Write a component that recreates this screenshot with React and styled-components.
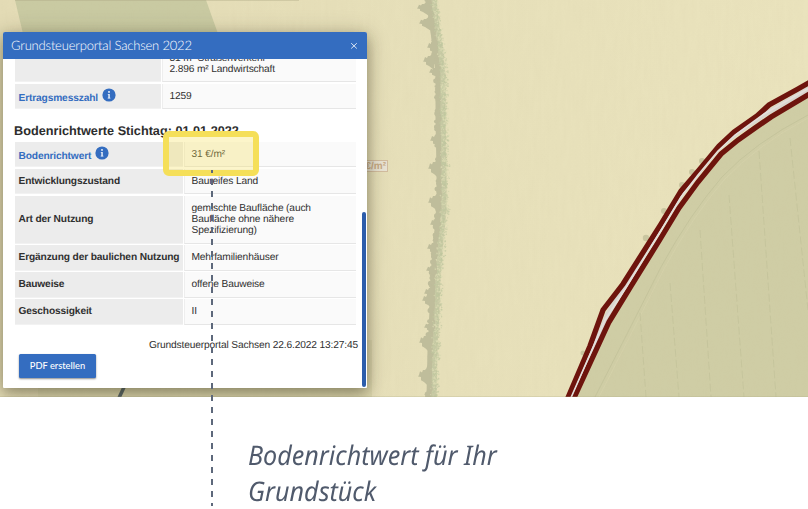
import React from "react";
import styled, { createGlobalStyle } from "styled-components";

const GlobalStyle = createGlobalStyle`
  * { box-sizing: border-box; }
  html, body { margin: 0; background: #fff; overflow: hidden; }
`;

const Page = styled.main`
  position: relative;
  width: 808px;
  height: 509px;
  overflow: hidden;
  background: #fff;
  font-family: "Liberation Sans", Arial, sans-serif;
  text-rendering: geometricPrecision;
`;

const MapArea = styled.section`
  position: relative;
  height: 397px;
  overflow: hidden;
  background: #e5deb7;
`;

const MapDrawing = styled.svg`
  display: block;
`;

const PriceTag = styled.span`
  position: absolute;
  left: 358px;
  top: 160px;
  width: 30px;
  height: 12px;
  padding-right: 1px;
  border: 1px solid #d3bd9f;
  background: #e9e3d3;
  color: #c7aa85;
  font-size: 10px;
  font-weight: 700;
  line-height: 11px;
  text-align: right;
`;

const Popup = styled.article`
  position: absolute;
  left: 3px;
  top: 32px;
  width: 364px;
  height: 355.5px;
  display: flex;
  flex-direction: column;
  border-radius: 3px 3px 1px 1px;
  background: #fff;
  box-shadow: 0 5px 14px rgba(50, 45, 20, 0.4), 0 2px 24px rgba(50, 45, 20, 0.2);
`;

const TitleBar = styled.header`
  flex: 0 0 27px;
  display: flex;
  align-items: center;
  justify-content: space-between;
  padding: 0 9px 0 8px;
  border-radius: 2px 2px 0 0;
  background: #346dc0;
  color: #fff;
`;

const Title = styled.h1`
  margin: 0;
  font: 300 13px/27px Lato, sans-serif;
  letter-spacing: -0.19px;
  white-space: nowrap;
`;

const Body = styled.div`
  position: relative;
  flex: 1;
  min-height: 0;
  overflow: hidden;
  padding: 0 11px 0 12px;
`;

const Rows = styled.div`
  display: grid;
  grid-template-columns: ${(p) => p.$label}px 1fr;
  column-gap: 1px;
  row-gap: 1.5px;
`;

const Label = styled.div`
  display: flex;
  align-items: center;
  gap: 4px;
  height: ${(p) => p.$h}px;
  padding: 1px 0 0 3.5px;
  border-bottom: 1px solid #f2f2f2;
  background: #ececec;
  color: ${(p) => (p.$link ? "#346dc0" : "#303030")};
  font-size: 10.2px;
  font-weight: 700;
  letter-spacing: -0.14px;
  line-height: 11px;
  white-space: nowrap;

  svg {
    position: relative;
    top: -1px;
  }
`;

const LabelText = styled.span`
  position: relative;
  top: ${(p) => (p.$low ? 2 : 0)}px;
`;

const Value = styled.div`
  display: flex;
  flex-direction: column;
  justify-content: ${(p) => (p.$end ? "flex-end" : "center")};
  height: ${(p) => p.$h}px;
  padding: ${(p) => (p.$end ? "0 0 6.5px" : "1px 0 0")} 6.5px;
  padding-left: 6.5px;
  border-left: 1px solid #eeeeee;
  border-bottom: 1px solid #e6e6e6;
  background: #fafafa;
  color: #303030;
  font-size: 10.2px;
  letter-spacing: -0.14px;
  line-height: 11px;
  white-space: pre-line;
`;

const SectionTitle = styled.h2`
  height: 32.5px;
  margin: 0 0 0 -1px;
  padding-top: 15px;
  color: #2d2d2d;
  font-size: 12.7px;
  font-weight: 700;
  line-height: 14px;
  white-space: nowrap;
`;

const Stamp = styled.p`
  margin: 15px -2px 0 0;
  color: #303030;
  font-size: 10.2px;
  letter-spacing: -0.14px;
  line-height: 12px;
  text-align: right;
`;

const PdfButton = styled.button`
  display: block;
  width: 77px;
  height: 24px;
  margin: 2.5px 0 0 4px;
  padding: 0;
  border: 0;
  border-radius: 1.5px;
  background: #346dc0;
  box-shadow: 0 1px 2px rgba(0, 0, 0, 0.45);
  color: #fff;
  font: 500 9.3px/24px Lato, sans-serif;
`;

const ScrollThumb = styled.div`
  position: absolute;
  right: 1px;
  top: 153px;
  width: 4px;
  height: 175px;
  border-radius: 2px;
  background: #2c5dab;
`;

const Highlight = styled.div`
  position: absolute;
  left: 163px;
  top: 131px;
  width: 96px;
  height: 45px;
  border: 6px solid #f5df59;
  border-radius: 6px;
  background: rgba(246, 223, 89, 0.32);
`;

const Leader = styled.svg`
  position: absolute;
  left: 211px;
  top: 170px;
`;

const Caption = styled.p`
  width: 320px;
  margin: 39.5px 0 0 248px;
  color: #505a6c;
  font: italic 400 27px/36px "Noto Sans", sans-serif;
  white-space: pre-line;
  transform: scaleX(0.93);
  transform-origin: 0 0;
`;

function noise(seed) {
  let s = seed;
  return () => {
    s = (s * 16807) % 2147483647;
    return s / 2147483647;
  };
}

const HEDGE = [
  [0, 425], [20, 427], [45, 431], [75, 434], [120, 434], [170, 435],
  [210, 435], [240, 432], [275, 429], [310, 428], [350, 426], [397, 425],
];

function hedgeX(y) {
  for (let i = 1; i < HEDGE.length; i++) {
    const [y0, x0] = HEDGE[i - 1];
    const [y1, x1] = HEDGE[i];
    if (y <= y1) return x0 + ((x1 - x0) * (y - y0)) / (y1 - y0);
  }
  return 425;
}

const rand = noise(73);
const leaves = Array.from({ length: 150 }, (_, i) => {
  const y = i * 2.7;
  return { y, x: hedgeX(y) + rand() * 4, r: 1 + rand() * 1.8 };
});
const tufts = Array.from({ length: 1900 }, () => {
  const y = rand() * 397;
  return { y, x: hedgeX(y) + 5 + (rand() + rand()) * 5, r: 0.4 + rand() * 0.6, light: rand() > 0.6 };
});
const CROWNS = [
  [419, 8, 4], [421, 23, 4], [429, 47, 5], [425, 61, 5], [431, 72, 4],
  [432, 140, 5], [430, 168, 6], [430, 202, 6], [432, 224, 5], [429, 248, 5],
  [428, 270, 4], [426, 293, 5], [424, 300, 5], [421, 342, 6], [426, 327, 4], [420, 376, 6],
];

function crownPath([x, y, r]) {
  return `M${x + 9} ${y - r * 1.8}L${x + 5} ${y - r}L${x + 3} ${y - r}L${x + 2} ${y - r * 0.6}L${x} ${y - r * 0.8}L${x - 1} ${y - 1}L${x - 2} ${y + 0.5}L${x + 1} ${y + 1}L${x + 1} ${y + r * 0.7}L${x + 4} ${y + r}L${x + 9} ${y + r * 1.8}Z`;
}

function Info() {
  return (
    <svg width="14" height="14" viewBox="0 0 14 14">
      <circle cx="7" cy="7" r="6.6" fill="#346dc0" />
      <circle cx="7" cy="3.9" r="0.9" fill="#fff" />
      <path d="M5.7 5.9H7.7V9.8H8.4V10.5H5.7V9.8H6.4V6.6H5.7Z" fill="#fff" />
    </svg>
  );
}

function Aerial() {
  return (
    <MapDrawing width="808" height="397" viewBox="0 0 808 397">
      <defs>
        <filter id="grain" x="0" y="0" width="100%" height="100%">
          <feTurbulence type="fractalNoise" baseFrequency="0.24 0.035" numOctaves="2" seed="8" />
          <feColorMatrix values="0 0 0 0 .6  0 0 0 0 .55  0 0 0 0 .34  .5 0 0 0 -.12" />
        </filter>
        <filter id="soft"><feGaussianBlur stdDeviation="0.45" /></filter>
        <linearGradient id="field" x2="1">
          <stop offset="0" stopColor="#e4dcb6" />
          <stop offset=".55" stopColor="#e7e0ba" />
          <stop offset="1" stopColor="#eae3bd" />
        </linearGradient>
      </defs>
      <rect width="808" height="397" fill="url(#field)" />
      <path d="M15 0H206L222 45V180H35L24 38Z" fill="#c9caa2" />
      <path d="M38 397V340H372V397Z" fill="#ddd7af" />
      <path d="M808 93L776 111L742 134L720 154L690 190L640 265L608 325L577 397H808Z" fill="#cfcda5" />
      <g fill="none" stroke="#bdbd96" strokeWidth=".6">
        <path d="M808 115Q754 143 722 177Q690 214 661 267L595 397" />
        <path d="M808 118Q756 146 724 180Q692 217 664 269L599 397" stroke="#d6d3ac" />
        <g strokeDasharray="8 3" opacity=".9">
          <path d="M790 138L808 310" /><path d="M759 151L776 397" />
          <path d="M729 195L744 397" /><path d="M700 230L711 397" />
          <path d="M670 283L679 397" /><path d="M640 313L646 397" />
        </g>
      </g>
      <rect width="808" height="397" filter="url(#grain)" opacity=".22" />
      <g filter="url(#soft)">
        <path d={`M${HEDGE.map(([y, x]) => `${x + 8} ${y}`).join("L")}`} fill="none" stroke="#c9caa5" strokeWidth="7" />
        <path d={`M${HEDGE.map(([y, x]) => `${x + 4} ${y}`).join("L")}`} fill="none" stroke="#bfbd9b" strokeWidth="5" />
        <g fill="#bfbd9b">
          {leaves.map((l, i) => <ellipse key={i} cx={l.x + 1.5} cy={l.y} rx={l.r} ry={l.r} />)}
          {CROWNS.map((c, i) => <path key={i} d={crownPath(c)} />)}
        </g>
        {tufts.map((t, i) => (
          <circle key={i} cx={t.x} cy={t.y} r={t.r} fill={t.light ? "#dcdbb3" : "#c1c7a0"} opacity=".7" />
        ))}
      </g>
      <g fill="#c9c6a0">
        <circle cx="702" cy="161" r="3" /><circle cx="692" cy="172" r="3" />
        <circle cx="682" cy="185" r="3" /><circle cx="664" cy="211" r="3" />
        <circle cx="646" cy="238" r="3.2" /><circle cx="583" cy="353" r="2.5" />
      </g>
      <path d="M812 87L767 113L735 134L716 150L682 193L658 230L624 286L608 314L595 345L570 400" fill="none" stroke="#d9d5ce" strokeWidth="5" />
      <g fill="none" stroke="#6e140d" strokeWidth="5.3">
        <path d="M812 81L797 89.5L769 105L757 116L734 132L719 146L700 169L681 191L661 224L623 284L603 310L590 346L567 400" />
        <path d="M812 92.5L771 117L755 128L738 140L721 154L698 182L679 208L659 241L631 286L609 322L573 400" />
      </g>
      <path d="M812 86.5L790 99L764 114L735 135L718 151L698 175L681 197L660 232L627 286L605 320L570 400" fill="none" stroke="#e4dfdb" strokeWidth="1.6" />
      <path d="M15 .5H299" stroke="#aaa580" opacity=".35" />
      <path d="M125 385L119 398" stroke="#566467" strokeWidth="3.5" />
      <path d="M0 396.6H808" stroke="#aaa884" opacity=".35" strokeWidth=".8" />
    </MapDrawing>
  );
}

const DETAILS = [
  { label: "Bodenrichtwert", value: "31 €/m²", h: 25.5, info: true },
  { label: "Entwicklungszustand", value: "Baureifes Land", h: 25.5 },
  { label: "Art der Nutzung", value: "gemischte Baufläche (auch\nBaufläche ohne nähere\nSpezifizierung)", h: 48 },
  { label: "Ergänzung der baulichen Nutzung", value: "Mehrfamilienhäuser", h: 25.5 },
  { label: "Bauweise", value: "offene Bauweise", h: 25.5 },
  { label: "Geschossigkeit", value: "II", h: 25.5 },
];

export default function App() {
  return (
    <Page>
      <GlobalStyle />
      <MapArea>
        <Aerial />
        <PriceTag>€/m²</PriceTag>
        <Popup>
          <TitleBar>
            <Title>Grundsteuerportal Sachsen 2022</Title>
            <svg width="8" height="8" viewBox="0 0 8 8">
              <path d="M1.2 1.2L6.8 6.5M6.8 1.2L1.2 6.5" stroke="#dce6f5" strokeWidth="1" />
            </svg>
          </TitleBar>
          <Body>
            <Rows $label={146}>
              <Label $h={23} />
              <Value $h={23} $end>{"31 m² Straßenverkehr\n2.896 m² Landwirtschaft"}</Value>
              <Label $h={25.5} $link><LabelText $low>Ertragsmesszahl</LabelText><Info /></Label>
              <Value $h={25.5}>1259</Value>
            </Rows>
            <SectionTitle>Bodenrichtwerte Stichtag: 01.01.2022</SectionTitle>
            <Rows $label={168}>
              {DETAILS.map((d) => (
                <React.Fragment key={d.label}>
                  <Label $h={d.h} $link={d.info}>
                    <LabelText $low={d.info}>{d.label}</LabelText>
                    {d.info && <Info />}
                  </Label>
                  <Value $h={d.h}>{d.value}</Value>
                </React.Fragment>
              ))}
            </Rows>
            <Stamp>Grundsteuerportal Sachsen 22.6.2022 13:27:45</Stamp>
            <PdfButton>PDF erstellen</PdfButton>
            <ScrollThumb />
          </Body>
        </Popup>
      </MapArea>
      <Caption>{"Bodenrichtwert für Ihr\nGrundstück"}</Caption>
      <Highlight />
      <Leader width="2" height="336" viewBox="0 0 2 336">
        <path d="M1 0V336" stroke="#5d687b" strokeWidth="2" strokeDasharray="6 6" strokeDashoffset="3" />
      </Leader>
    </Page>
  );
}
